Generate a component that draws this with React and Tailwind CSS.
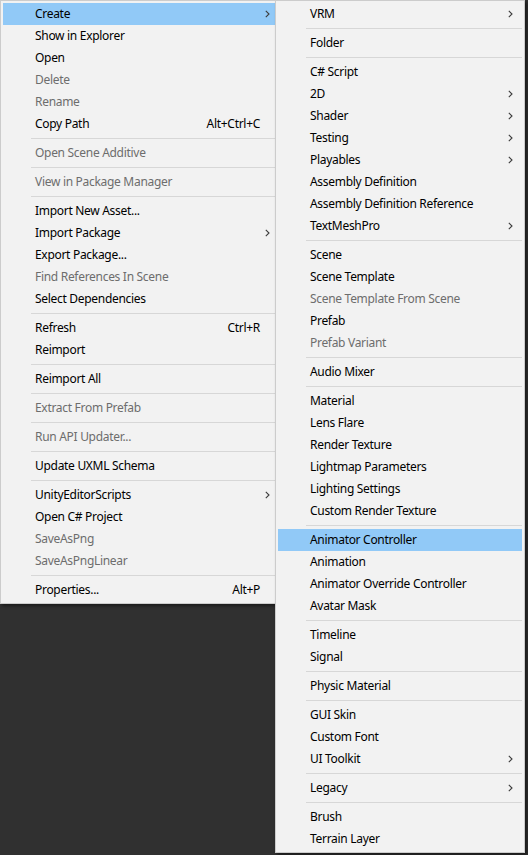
const left = [
  { label: 'Create', sub: true, active: true },
  { label: 'Show in Explorer' },
  { label: 'Open' },
  { label: 'Delete', disabled: true },
  { label: 'Rename', disabled: true },
  { label: 'Copy Path', shortcut: 'Alt+Ctrl+C' },
  { sep: true },
  { label: 'Open Scene Additive', disabled: true },
  { sep: true },
  { label: 'View in Package Manager', disabled: true },
  { sep: true },
  { label: 'Import New Asset...' },
  { label: 'Import Package', sub: true },
  { label: 'Export Package...' },
  { label: 'Find References In Scene', disabled: true },
  { label: 'Select Dependencies' },
  { sep: true },
  { label: 'Refresh', shortcut: 'Ctrl+R' },
  { label: 'Reimport' },
  { sep: true },
  { label: 'Reimport All' },
  { sep: true },
  { label: 'Extract From Prefab', disabled: true },
  { sep: true },
  { label: 'Run API Updater...', disabled: true },
  { sep: true },
  { label: 'Update UXML Schema' },
  { sep: true },
  { label: 'UnityEditorScripts', sub: true },
  { label: 'Open C# Project' },
  { label: 'SaveAsPng', disabled: true },
  { label: 'SaveAsPngLinear', disabled: true },
  { sep: true },
  { label: 'Properties...', shortcut: 'Alt+P' },
]

const create = [
  { label: 'VRM', sub: true },
  { sep: true },
  { label: 'Folder' },
  { sep: true },
  { label: 'C# Script' },
  { label: '2D', sub: true },
  { label: 'Shader', sub: true },
  { label: 'Testing', sub: true },
  { label: 'Playables', sub: true },
  { label: 'Assembly Definition' },
  { label: 'Assembly Definition Reference' },
  { label: 'TextMeshPro', sub: true },
  { sep: true },
  { label: 'Scene' },
  { label: 'Scene Template' },
  { label: 'Scene Template From Scene', disabled: true },
  { label: 'Prefab' },
  { label: 'Prefab Variant', disabled: true },
  { sep: true },
  { label: 'Audio Mixer' },
  { sep: true },
  { label: 'Material' },
  { label: 'Lens Flare' },
  { label: 'Render Texture' },
  { label: 'Lightmap Parameters' },
  { label: 'Lighting Settings' },
  { label: 'Custom Render Texture' },
  { sep: true },
  { label: 'Animator Controller', active: true },
  { label: 'Animation' },
  { label: 'Animator Override Controller' },
  { label: 'Avatar Mask' },
  { sep: true },
  { label: 'Timeline' },
  { label: 'Signal' },
  { sep: true },
  { label: 'Physic Material' },
  { sep: true },
  { label: 'GUI Skin' },
  { label: 'Custom Font' },
  { label: 'UI Toolkit', sub: true },
  { sep: true },
  { label: 'Legacy', sub: true },
  { sep: true },
  { label: 'Brush' },
  { label: 'Terrain Layer' },
]

const Chevron = () => (
  <svg width="5" height="8" viewBox="0 0 5 8" className="block">
    <path d="M0.8 0.8 L4 4 L0.8 7.2" fill="none" stroke="#3c3c3c" strokeWidth="1.1" />
  </svg>
)

const MenuRow = ({ item }) => {
  if (item.sep) {
    return (
      <div className="h-[7px] flex items-center">
        <div className="ml-[28px] h-px flex-1 bg-[#d7d7d7]" />
      </div>
    )
  }

  return (
    <div
      className={`h-[22px] flex items-center pl-[32px] ${item.active ? 'bg-[#91c9f7]' : ''} ${
        item.disabled ? 'text-[#6d6d6d]' : 'text-black'
      }`}
    >
      <span className="flex-1 whitespace-nowrap">{item.label}</span>
      {item.shortcut && <span className="whitespace-nowrap">{item.shortcut}</span>}
      <span className="w-[19px] flex justify-end pr-[9px]">{item.sub && <Chevron />}</span>
    </div>
  )
}

const Menu = ({ items, className }) => (
  <div
    className={`border border-[#cccccc] bg-[#f2f2f2] p-[2px] shadow-[2px_2px_3px_rgba(0,0,0,0.45)] ${className}`}
  >
    {items.map((item, i) => (
      <MenuRow key={i} item={item} />
    ))}
  </div>
)

export default function App() {
  return (
    <div
      className="h-screen w-full overflow-hidden bg-[#303030] text-[12px] leading-none tracking-[-0.3px]"
      style={{ fontFamily: '"Noto Sans", "Open Sans", sans-serif' }}
    >
      <div className="flex items-start">
        <Menu items={left} className="w-[282px] shrink-0" />
        {/* submenu sits over the right end of the parent menu */}
        <Menu items={create} className="relative z-10 -ml-[7px] w-[250px] shrink-0" />
      </div>
    </div>
  )
}
